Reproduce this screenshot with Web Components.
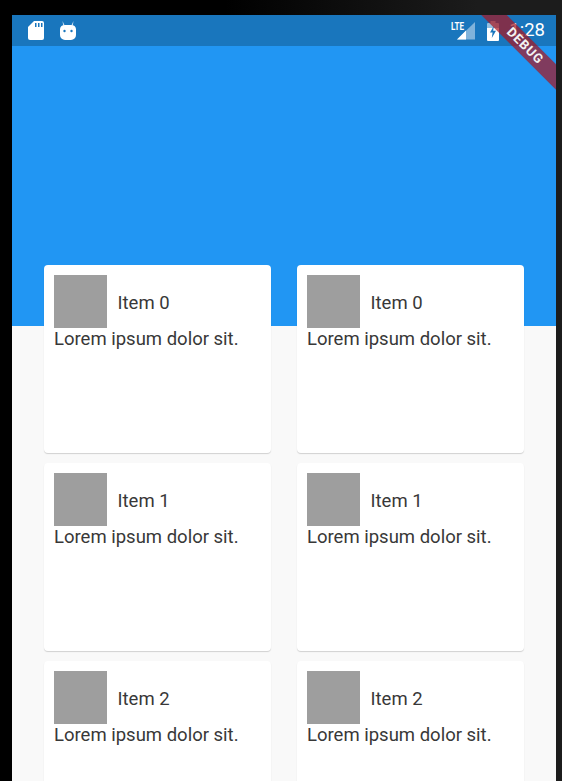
<!DOCTYPE html>
<html>
<head>
<meta charset="utf-8">
<style>
  html, body { margin: 0; height: 781px; overflow: hidden; background: #000; }
</style>
</head>
<body>
<device-frame>
  <status-bar></status-bar>
  <app-header></app-header>
  <card-grid>
    <item-card label="Item 0"></item-card>
    <item-card label="Item 0"></item-card>
    <item-card label="Item 1"></item-card>
    <item-card label="Item 1"></item-card>
    <item-card label="Item 2"></item-card>
    <item-card label="Item 2"></item-card>
  </card-grid>
  <debug-banner></debug-banner>
</device-frame>

<script>
class deviceFrame extends HTMLElement {
  constructor() {
    super();
    this.shadowDOM = this.attachShadow({ mode: 'open' });
    this.shadowDOM.innerHTML = `
      <style>
        :host {
          display: block;
          height: 781px;
          box-sizing: border-box;
          padding: 15px 6px 0 12px;
          background: linear-gradient(#1c1c1c, #1c1c1c) right / 6px 100% no-repeat,
                      linear-gradient(90deg, #000 40%, #1c1c1c 85%) top / 100% 15px no-repeat,
                      #000;
          font-family: Roboto, "Liberation Sans", sans-serif;
        }
        .screen {
          position: relative;
          height: 766px;
          overflow: hidden;
          background: #f9f9f9;
        }
      </style>
      <div class="screen"><slot></slot></div>
    `;
  }
}

class statusBar extends HTMLElement {
  constructor() {
    super();
    this.shadowDOM = this.attachShadow({ mode: 'open' });
    this.shadowDOM.innerHTML = `
      <style>
        :host {
          display: flex;
          align-items: center;
          height: 31px;
          background: #1976bd;
          color: #fff;
          padding: 0 11px 0 16px;
        }
        svg { display: block; }
        .android { margin-left: 16px; }
        .spacer { flex: 1; }
        .signal { margin-right: 12px; }
        .battery { margin-right: 10px; }
        .time { font-size: 18.500px; line-height: 31px; }
      </style>
      <svg width="16" height="19" viewBox="0 0 16 19">
        <path fill="#fff" d="M6 0h8a2 2 0 0 1 2 2v15a2 2 0 0 1-2 2H2a2 2 0 0 1-2-2V6z"/>
        <path fill="#1976bd" d="M7 2h1.500v4H7zM10 2h1.500v4H10zM13 2h1.500v4H13z"/>
      </svg>
      <svg class="android" width="16" height="19" viewBox="0 0 16 19">
        <path fill="#fff" opacity=".8" d="M2.500 0l2.200 4.500H3.200zM13.500 0l-2.200 4.500h1.500z"/>
        <path fill="#fff" d="M0 8a5 4.500 0 0 1 5-4h6a5 4.500 0 0 1 5 4v6a5 5 0 0 1-5 5H5a5 5 0 0 1-5-5z"/>
        <circle cx="4.500" cy="10" r="1.200" fill="#1976bd"/>
        <circle cx="11.500" cy="10" r="1.200" fill="#1976bd"/>
      </svg>
      <div class="spacer"></div>
      <svg class="signal" width="24" height="25" viewBox="0 0 24 25">
        <text x="0" y="11.500" font-family="Roboto, sans-serif" font-size="10.500" font-weight="700" fill="#fff" textLength="13" lengthAdjust="spacingAndGlyphs">LTE</text>
        <path fill="#fff" fill-opacity=".45" d="M24 4v17.500H6z"/>
        <path fill="#fff" d="M15 12.500v9H6z"/>
      </svg>
      <svg class="battery" width="12" height="20" viewBox="0 0 12 20">
        <path fill="#fff" fill-opacity=".55" d="M3.500 0h5v2H11a1 1 0 0 1 1 1v5H0V3a1 1 0 0 1 1-1h2.500z"/>
        <path fill="#fff" d="M0 7h12v12a1 1 0 0 1-1 1H1a1 1 0 0 1-1-1z"/>
        <path fill="#1976bd" d="M6.800 5L3 11.500h2.600L4.800 17 9 9.800H6.200z"/>
      </svg>
      <span class="time">1:28</span>
    `;
  }
}

class appHeader extends HTMLElement {
  constructor() {
    super();
    this.shadowDOM = this.attachShadow({ mode: 'open' });
    this.shadowDOM.innerHTML = `
      <style>
        :host { display: block; height: 280px; background: #2196f3; }
      </style>
    `;
  }
}

class cardGrid extends HTMLElement {
  constructor() {
    super();
    this.shadowDOM = this.attachShadow({ mode: 'open' });
    this.shadowDOM.innerHTML = `
      <style>
        :host {
          display: grid;
          grid-template-columns: 227px 227px;
          grid-auto-rows: 188px;
          column-gap: 26px;
          row-gap: 10px;
          margin-top: -61px;
          padding: 0 32px;
        }
      </style>
      <slot></slot>
    `;
  }
}

class itemCard extends HTMLElement {
  constructor() {
    super();
    this.shadowDOM = this.attachShadow({ mode: 'open' });
  }

  connectedCallback() {
    this.render();
  }

  render() {
    this.shadowDOM.innerHTML = `
      <style>
        :host {
          display: block;
          box-sizing: border-box;
          padding: 10px;
          background: #fff;
          border-radius: 4px;
          box-shadow: 0 1px 1px rgba(0, 0, 0, .16);
          color: #383838;
          font-size: 18.500px;
        }
        .head { display: flex; align-items: center; }
        .thumb { width: 53px; height: 53px; background: #9e9e9e; }
        .label { margin: 2px 0 0 10.500px; }
        p { margin: 0; line-height: 23px; }
      </style>
      <div class="head">
        <div class="thumb"></div>
        <span class="label">${this.getAttribute('label')}</span>
      </div>
      <p>Lorem ipsum dolor sit.</p>
    `;
  }
}

class debugBanner extends HTMLElement {
  constructor() {
    super();
    this.shadowDOM = this.attachShadow({ mode: 'open' });
    this.shadowDOM.innerHTML = `
      <style>
        :host {
          position: absolute;
          top: 0;
          right: 0;
          width: 90px;
          height: 90px;
          overflow: hidden;
          pointer-events: none;
        }
        .ribbon {
          position: absolute;
          top: 22px;
          right: -34px;
          width: 130px;
          height: 18px;
          line-height: 18px;
          transform: rotate(45deg);
          background: rgba(170, 20, 30, .7);
          color: #f2f2f2;
          font-size: 13px;
          font-weight: 700;
          letter-spacing: .8px;
          text-align: center;
        }
      </style>
      <div class="ribbon">DEBUG</div>
    `;
  }
}

customElements.define('device-frame', deviceFrame);
customElements.define('status-bar', statusBar);
customElements.define('app-header', appHeader);
customElements.define('card-grid', cardGrid);
customElements.define('item-card', itemCard);
customElements.define('debug-banner', debugBanner);
</script>
</body>
</html>
